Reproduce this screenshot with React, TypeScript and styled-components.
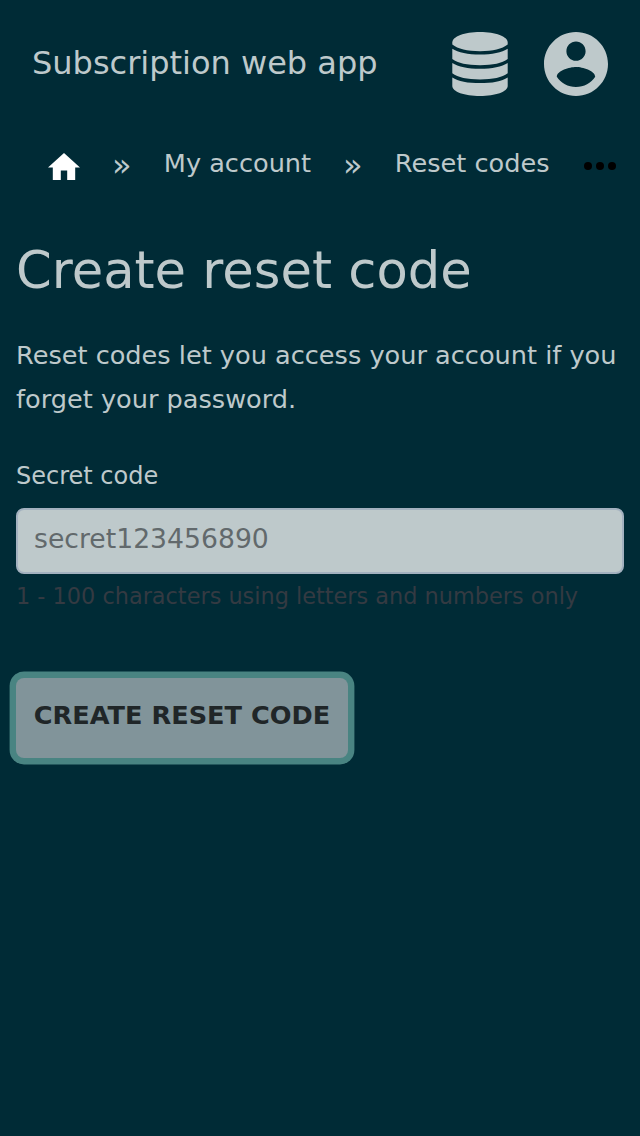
import React from "react";
import styled, { createGlobalStyle } from "styled-components";

const Global = createGlobalStyle`
  * { box-sizing: border-box; }
  body {
    margin: 0;
    background: #002b36;
    color: #bec9cb;
    font-family: "DejaVu Sans", sans-serif;
    font-size: 25.6px;
  }
`;

const Page = styled.div`
  min-height: 1136px;
  width: 640px;
  overflow: hidden;
`;

const Header = styled.header`
  display: flex;
  align-items: center;
  height: 128px;
  padding: 0 32px;
`;

const Brand = styled.a`
  flex: 1;
  margin-top: -2px;
  font-size: 32px;
  line-height: 48px;
  white-space: nowrap;
`;

const HeaderIcons = styled.div`
  display: flex;
  gap: 36px;
  svg { display: block; }
`;

const Crumbs = styled.nav`
  display: flex;
  align-items: center;
  height: 76px;
  padding-left: 48px;
  line-height: 44px;
  white-space: nowrap;
  svg { display: block; }
`;

const HomeLink = styled.a`
  width: 32px;
  margin-top: 1px;
`;

const Crumb = styled.a<{ $width: number }>`
  width: ${(p) => p.$width}px;
  margin-top: -7px;
`;

const Separator = styled.span`
  width: 83.8px;
  text-align: center;
  font-size: 32px;
  margin-top: -2px;
`;

const More = styled.span`
  margin-left: 34px;
`;

const Main = styled.main`
  padding: 32px 16px 0;
`;

const Title = styled.h1`
  margin: 0;
  font-size: 51.2px;
  font-weight: 400;
  line-height: 68px;
`;

const Intro = styled.p`
  margin: 29px 0 0;
  line-height: 44px;
`;

const Label = styled.label`
  display: block;
  margin-top: 37px;
  font-size: 24px;
  line-height: 36px;
`;

const Input = styled.input`
  display: block;
  width: 100%;
  height: 66px;
  margin-top: 14px;
  padding: 0 16px 6px;
  border: 2px solid #a3b1bf;
  border-radius: 8px;
  background: #bec9cb;
  font: 26.66px "DejaVu Sans", sans-serif;
  &::placeholder { color: #62696c; opacity: 1; }
`;

const Hint = styled.small`
  display: block;
  margin-top: 5px;
  font-size: 22.4px;
  line-height: 34px;
  color: #343a42;
`;

const Submit = styled.button`
  display: block;
  width: 332px;
  height: 80px;
  margin-top: 65px;
  padding: 0 0 7px;
  border: 0;
  border-radius: 8px;
  background: #81949a;
  box-shadow: 0 0 0 6.4px #498482;
  color: #202628;
  font: 700 25.6px "DejaVu Sans", sans-serif;
  text-transform: uppercase;
  white-space: nowrap;
`;

const DatabaseIcon = () => (
  <svg width="56" height="64" viewBox="0 0 56 64" fill="currentColor">
    <path d="M.3 10.500C.3 4.500 12.500 0 28 0s27.700 4.500 27.700 10.500v2C50 17 41 19.200 28 19.200S6 17 .3 12.500z" />
    <path d="M.3 16.700C6 20.600 16 22.500 28 22.500s22-1.900 27.700-5.800v10.300C50 31.200 41 33.200 28 33.200S6 31.200.3 27z" />
    <path d="M.3 30.900C6 34.800 16 36.700 28 36.700s22-1.900 27.700-5.800v10.400C50 45.500 41 47.500 28 47.500S6 45.500.3 41.300z" />
    <path d="M.3 45.400C6 49.300 16 51.100 28 51.100s22-1.800 27.700-5.700V54C55.700 59.700 43.500 64 28 64S.3 59.700.3 54z" />
  </svg>
);

const AccountIcon = () => (
  <svg width="64" height="64" viewBox="2 2 20 20" fill="currentColor">
    <path d="M12 2C6.480 2 2 6.480 2 12s4.480 10 10 10 10-4.480 10-10S17.520 2 12 2zm0 3c1.660 0 3 1.340 3 3s-1.340 3-3 3-3-1.340-3-3 1.340-3 3-3zm0 14.200c-2.500 0-4.710-1.280-6-3.220.030-1.990 4-3.080 6-3.080 1.990 0 5.970 1.090 6 3.080-1.290 1.940-3.500 3.220-6 3.220z" />
  </svg>
);

export default function App() {
  return (
    <Page>
      <Global />
      <Header>
        <Brand>Subscription web app</Brand>
        <HeaderIcons>
          <DatabaseIcon />
          <AccountIcon />
        </HeaderIcons>
      </Header>
      <Crumbs>
        <HomeLink aria-label="Home">
          <svg width="32" height="27.200" viewBox="2 3 20 17" fill="#fff">
            <path d="M10 20v-6h4v6h5v-8h3L12 3 2 12h3v8z" />
          </svg>
        </HomeLink>
        <Separator>»</Separator>
        <Crumb $width={147.2}>My account</Crumb>
        <Separator>»</Separator>
        <Crumb $width={155.200}>Reset codes</Crumb>
        <More>
          <svg width="32" height="8" viewBox="0 0 32 8" fill="#000">
            <circle cx="4" cy="4" r="4" />
            <circle cx="16" cy="4" r="4" />
            <circle cx="28" cy="4" r="4" />
          </svg>
        </More>
      </Crumbs>
      <Main>
        <Title>Create reset code</Title>
        <Intro>Reset codes let you access your account if you forget your password.</Intro>
        <Label htmlFor="code">Secret code</Label>
        <Input id="code" placeholder="secret123456890" />
        <Hint>1 - 100 characters using letters and numbers only</Hint>
        <Submit>Create reset code</Submit>
      </Main>
    </Page>
  );
}
